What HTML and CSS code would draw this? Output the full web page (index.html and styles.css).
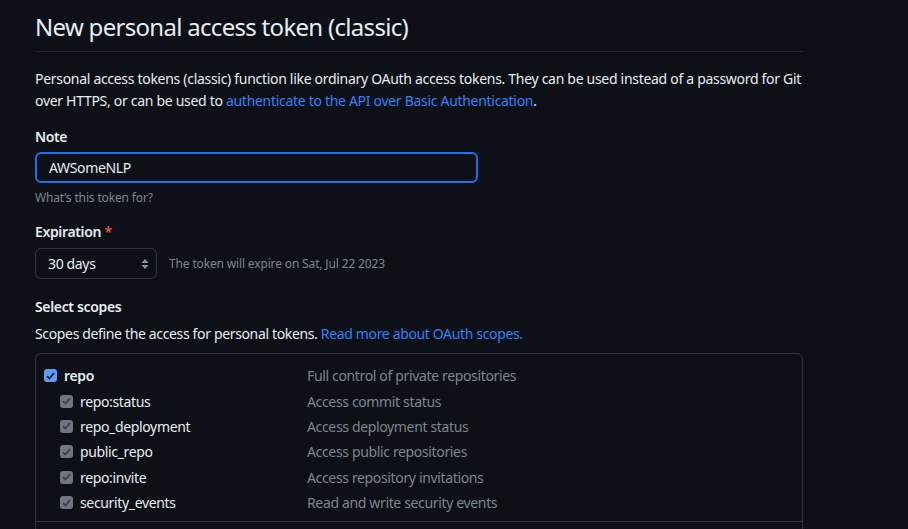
FILE: index.html
```html
<!DOCTYPE html>
<html>
<head>
<meta charset="utf-8">
<link rel="stylesheet" href="styles.css">
</head>
<body>
<main class="page">
  <h1 class="title">New personal access token (classic)</h1>
  <p class="intro"><span>Personal access tokens (classic) function like ordinary OAuth access tokens. They can be used instead of a password for Git</span> <span>over HTTPS, or can be used to</span> <a class="link" href="#">authenticate to the API over Basic Authentication</a><span>.</span></p>

  <div class="field">
    <label class="label">Note</label>
    <div class="input">AWSomeNLP</div>
    <div class="hint">What’s this token for?</div>
  </div>

  <div class="field">
    <label class="label">Expiration <span class="req">*</span></label>
    <div class="select-row">
      <div class="select">
        <span>30 days</span>
        <svg class="caret" width="8" height="12" viewBox="0 0 8 12"><path d="M4 1 L7.5 5 H0.5 Z M4 11 L0.5 7 H7.5 Z" fill="#8b949e"/></svg>
      </div>
      <span class="hint inline">The token will expire on Sat, Jul 22 2023</span>
    </div>
  </div>

  <div class="field scopes-field">
    <label class="label">Select scopes</label>
    <p class="scopes-desc"><span>Scopes define the access for personal tokens.</span> <a class="link" href="#">Read more about OAuth scopes.</a></p>
    <div class="scopes">
      <div class="group">
        <div class="row main">
          <span class="name"><span class="cb on"><svg width="9" height="8" viewBox="0 0 9 8"><path d="M1 4.2 L3.4 6.5 L8 1.2" stroke="#1c2128" stroke-width="1.8" fill="none"/></svg></span><b>repo</b></span>
          <span class="desc">Full control of private repositories</span>
        </div>
        <div class="row sub">
          <span class="name"><span class="cb dis"><svg width="9" height="8" viewBox="0 0 9 8"><path d="M1 4.2 L3.4 6.5 L8 1.2" stroke="#3b4149" stroke-width="1.8" fill="none"/></svg></span>repo:status</span>
          <span class="desc">Access commit status</span>
        </div>
        <div class="row sub">
          <span class="name"><span class="cb dis"><svg width="9" height="8" viewBox="0 0 9 8"><path d="M1 4.2 L3.4 6.5 L8 1.2" stroke="#3b4149" stroke-width="1.8" fill="none"/></svg></span>repo_deployment</span>
          <span class="desc">Access deployment status</span>
        </div>
        <div class="row sub">
          <span class="name"><span class="cb dis"><svg width="9" height="8" viewBox="0 0 9 8"><path d="M1 4.2 L3.4 6.5 L8 1.2" stroke="#3b4149" stroke-width="1.8" fill="none"/></svg></span>public_repo</span>
          <span class="desc">Access public repositories</span>
        </div>
        <div class="row sub">
          <span class="name"><span class="cb dis"><svg width="9" height="8" viewBox="0 0 9 8"><path d="M1 4.2 L3.4 6.5 L8 1.2" stroke="#3b4149" stroke-width="1.8" fill="none"/></svg></span>repo:invite</span>
          <span class="desc">Access repository invitations</span>
        </div>
        <div class="row sub">
          <span class="name"><span class="cb dis"><svg width="9" height="8" viewBox="0 0 9 8"><path d="M1 4.2 L3.4 6.5 L8 1.2" stroke="#3b4149" stroke-width="1.8" fill="none"/></svg></span>security_events</span>
          <span class="desc">Read and write security events</span>
        </div>
      </div>
      <div class="group next"></div>
    </div>
  </div>
</main>
</body>
</html>
```
FILE: styles.css
```css
html, body {
  margin: 0;
  padding: 0;
  background: #0d1117;
}
body {
  font-family: "Noto Sans", "Open Sans", sans-serif;
  font-size: 14px;
  letter-spacing: -0.35px;
  color: #e6edf3;
  overflow: hidden;
  height: 529px;
}
.page {
  width: 768px;
  margin-left: 35px;
  padding-top: 9px;
}
.title {
  margin: 0;
  font-size: 24px;
  font-weight: 400;
  letter-spacing: -0.7px;
  line-height: 36px;
  padding-bottom: 6px;
  border-bottom: 1px solid #21262d;
}
.intro {
  margin: 16px 0 0;
  line-height: 22px;
  letter-spacing: -0.3px;
}
.link {
  color: #2f81f7;
  text-decoration: none;
}
.field {
  margin-top: 15px;
}
.scopes-field {
  margin-top: 18px;
}
.label {
  display: block;
  font-weight: 600;
  line-height: 20px;
}
.req {
  color: #f85149;
}
.input {
  margin-top: 5px;
  width: 415px;
  height: 27px;
  border: 2px solid #1f6feb;
  border-radius: 6px;
  padding: 0 12px;
  line-height: 27px;
  box-sizing: content-box;
}
.hint {
  font-size: 12px;
  letter-spacing: -0.15px;
  color: #7d8590;
  line-height: 18px;
  margin-top: 6px;
}
.hint.inline {
  margin: 0;
}
.select-row {
  margin-top: 6px;
  display: flex;
  align-items: center;
  gap: 12px;
}
.select {
  width: 122px;
  height: 31px;
  box-sizing: border-box;
  border: 1px solid #30363d;
  border-radius: 6px;
  padding: 0 7px 0 12px;
  display: flex;
  align-items: center;
  justify-content: space-between;
}
.scopes-desc {
  margin: 6px 0 0;
  line-height: 22px;
}
.scopes {
  margin-top: 8px;
  border: 1px solid #30363d;
  border-radius: 6px;
}
.group {
  padding: 9px 8px 6px;
}
.group.next {
  border-top: 1px solid #30363d;
  height: 20px;
}
.row {
  display: flex;
  align-items: center;
  height: 25.4px;
}
.name {
  display: flex;
  align-items: center;
  width: 263px;
}
.row.sub .name {
  padding-left: 16px;
  width: 247px;
}
.name b {
  font-weight: 600;
}
.desc {
  color: #7d8590;
}
.cb {
  width: 13px;
  height: 13px;
  border-radius: 3px;
  display: inline-flex;
  align-items: center;
  justify-content: center;
  margin-right: 7px;
  flex: none;
}
.cb.on {
  background: #5a9cf8;
}
.cb.dis {
  background: #6e7681;
}
```
